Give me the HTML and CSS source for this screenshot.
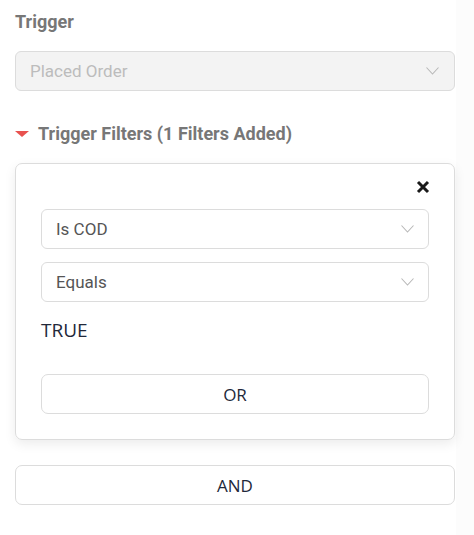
FILE: index.html
```html
<!DOCTYPE html>
<html>
<head>
<meta charset="utf-8">
<link rel="stylesheet" href="styles.css">
</head>
<body>
<div class="page">
  <div class="label">Trigger</div>
  <div class="select disabled">
    <span>Placed Order</span>
    <svg class="chev" width="13" height="8" viewBox="0 0 13 8"><path d="M0.5 0.5 L6.5 7 L12.5 0.5" fill="none" stroke="currentColor" stroke-width="1.1"/></svg>
  </div>
  <div class="filters-head">
    <span class="tri"></span>
    <span>Trigger Filters (1 Filters Added)</span>
  </div>
  <div class="card">
    <div class="close-row">
      <svg width="14" height="14" viewBox="0 0 14 14"><path d="M2 2 L12 12 M12 2 L2 12" stroke="#1a1a1a" stroke-width="3" stroke-linecap="butt"/></svg>
    </div>
    <div class="select">
      <span>Is COD</span>
      <svg class="chev" width="13" height="8" viewBox="0 0 13 8"><path d="M0.5 0.5 L6.5 7 L12.5 0.5" fill="none" stroke="currentColor" stroke-width="1.1"/></svg>
    </div>
    <div class="select">
      <span>Equals</span>
      <svg class="chev" width="13" height="8" viewBox="0 0 13 8"><path d="M0.5 0.5 L6.5 7 L12.5 0.5" fill="none" stroke="currentColor" stroke-width="1.1"/></svg>
    </div>
    <div class="value">TRUE</div>
    <button class="btn">OR</button>
  </div>
  <button class="btn and">AND</button>
</div>
</body>
</html>
```
FILE: styles.css
```css
* { box-sizing: border-box; }
html, body { margin: 0; padding: 0; background: #fff; }
body { font-family: Roboto, "Noto Sans", sans-serif; }
.page {
  width: 474px;
  height: 535px;
  padding: 11px 19px 0 15px;
  background: linear-gradient(to right, #fff 456px, #fcfcfc 456px);
}
.label {
  font-size: 18px;
  font-weight: 700;
  color: #777;
  line-height: 22px;
}
.select {
  height: 40px;
  border: 1px solid #dcdcdc;
  border-radius: 6px;
  display: flex;
  align-items: center;
  justify-content: space-between;
  padding: 0 14px 0 14px;
  font-size: 17px;
  color: #555;
  background: #fff;
}
.select .chev { color: #b8b8b8; }
.select.disabled {
  margin-top: 18px;
  background: #f3f3f3;
  color: #bcbcbc;
  padding-right: 15px;
}
.filters-head {
  margin-top: 32px;
  display: flex;
  align-items: center;
  gap: 9px;
  font-size: 18px;
  font-weight: 700;
  color: #777;
  line-height: 22px;
}
.tri {
  width: 0; height: 0;
  margin-top: -1px;
  border-left: 7px solid transparent;
  border-right: 7px solid transparent;
  border-top: 6px solid #e8524f;
}
.card {
  margin-top: 18px;
  border: 1px solid #dcdcdc;
  border-radius: 7px;
  box-shadow: 0 4px 12px rgba(0,0,0,0.08);
  padding: 16px 25px 25px 25px;
  display: flex;
  flex-direction: column;
}
.close-row {
  display: flex;
  justify-content: flex-end;
  height: 14px;
  margin-right: -1px;
  margin-bottom: 15px;
}
.card .select + .select { margin-top: 13px; }
.value {
  font-family: "Open Sans", "Noto Sans", sans-serif;
  font-size: 19px;
  color: #22283a;
  margin-top: 17px;
  line-height: 22px;
}
.btn {
  display: block;
  width: 100%;
  height: 40px;
  border: 1px solid #dcdcdc;
  border-radius: 7px;
  background: #fff;
  font-family: "Open Sans", "Noto Sans", sans-serif;
  font-size: 17px;
  color: #22283a;
  margin-top: 33px;
  padding: 0;
}
.btn.and { margin-top: 25px; }
```
